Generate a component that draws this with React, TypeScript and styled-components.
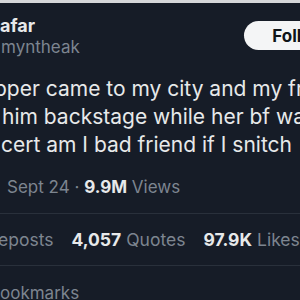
import styled, { createGlobalStyle } from 'styled-components';

const GlobalStyle = createGlobalStyle`
  html, body {
    margin: 0;
    padding: 0;
    background: #161c27;
  }
  body {
    font-family: Inter, "Noto Sans", sans-serif;
    -webkit-font-smoothing: antialiased;
  }
`;

const Frame = styled.div`
  width: 300px;
  height: 300px;
  overflow: hidden;
  background: #161c27;
  border-top: 3px solid #d6d7d9;
  box-sizing: border-box;
`;

const Header = styled.div`
  display: flex;
  justify-content: space-between;
  align-items: flex-start;
  height: 72px;
`;

const Author = styled.div`
  display: flex;
  flex-direction: column;
  padding-top: 12px;
`;

const Name = styled.span`
  font-size: 18px;
  font-weight: 700;
  line-height: 22px;
  color: #e7e9ea;
`;

const Handle = styled.span`
  font-size: 17px;
  line-height: 20px;
  margin-left: 1px;
  color: #7d8590;
`;

const FollowButton = styled.button`
  margin-top: 18px;
  margin-right: -54px;
  height: 29px;
  padding: 0 28px;
  border: none;
  border-radius: 999px;
  background: #f4f5f6;
  color: #0f1419;
  font-family: inherit;
  font-size: 17px;
  font-weight: 700;
`;

const Body = styled.div`
  display: flex;
  flex-direction: column;
  font-size: 21px;
  line-height: 28px;
  color: #e7e9ea;
  white-space: nowrap;
`;

const Line = styled.span<{ $shift?: number }>`
  margin-left: ${(p) => p.$shift ?? 0}px;
`;

const Meta = styled.div`
  margin-top: 18px;
  height: 36px;
  font-size: 17px;
  line-height: 20px;
  color: #7d8590;
  white-space: nowrap;
  padding-left: 7px;
  border-bottom: 1px solid #29303b;
`;

const Strong = styled.b`
  font-weight: 700;
  color: #e7e9ea;
`;

const Stats = styled.div`
  display: flex;
  gap: 18px;
  align-items: center;
  height: 51px;
  font-size: 17.5px;
  line-height: 20px;
  color: #7d8590;
  white-space: nowrap;
  border-bottom: 1px solid #29303b;
`;

const Stat = styled.span<{ $shift?: number }>`
  display: flex;
  gap: 5px;
  margin-left: ${(p) => p.$shift ?? 0}px;
`;

const Bookmarks = styled.div`
  padding-top: 17px;
  font-size: 17px;
  line-height: 20px;
  color: #7d8590;
  white-space: nowrap;
`;

export default function App() {
  return (
    <>
      <GlobalStyle />
      <Frame>
        <Header>
          <Author>
            <Name>afar</Name>
            <Handle>myntheak</Handle>
          </Author>
          <FollowButton>Follow</FollowButton>
        </Header>
        <Body>
          <Line $shift={-6}>pper came to my city and my friend</Line>
          <Line $shift={2}>him backstage while her bf was at the</Line>
          <Line $shift={1}>cert am I bad friend if I snitch</Line>
        </Body>
        <Meta>
          Sept 24 · <Strong>9.9M</Strong> Views
        </Meta>
        <Stats>
          <Stat $shift={-2}>eposts</Stat>
          <Stat>
            <Strong>4,057</Strong> Quotes
          </Stat>
          <Stat>
            <Strong>97.9K</Strong> Likes
          </Stat>
        </Stats>
        <Bookmarks>ookmarks</Bookmarks>
      </Frame>
    </>
  );
}
